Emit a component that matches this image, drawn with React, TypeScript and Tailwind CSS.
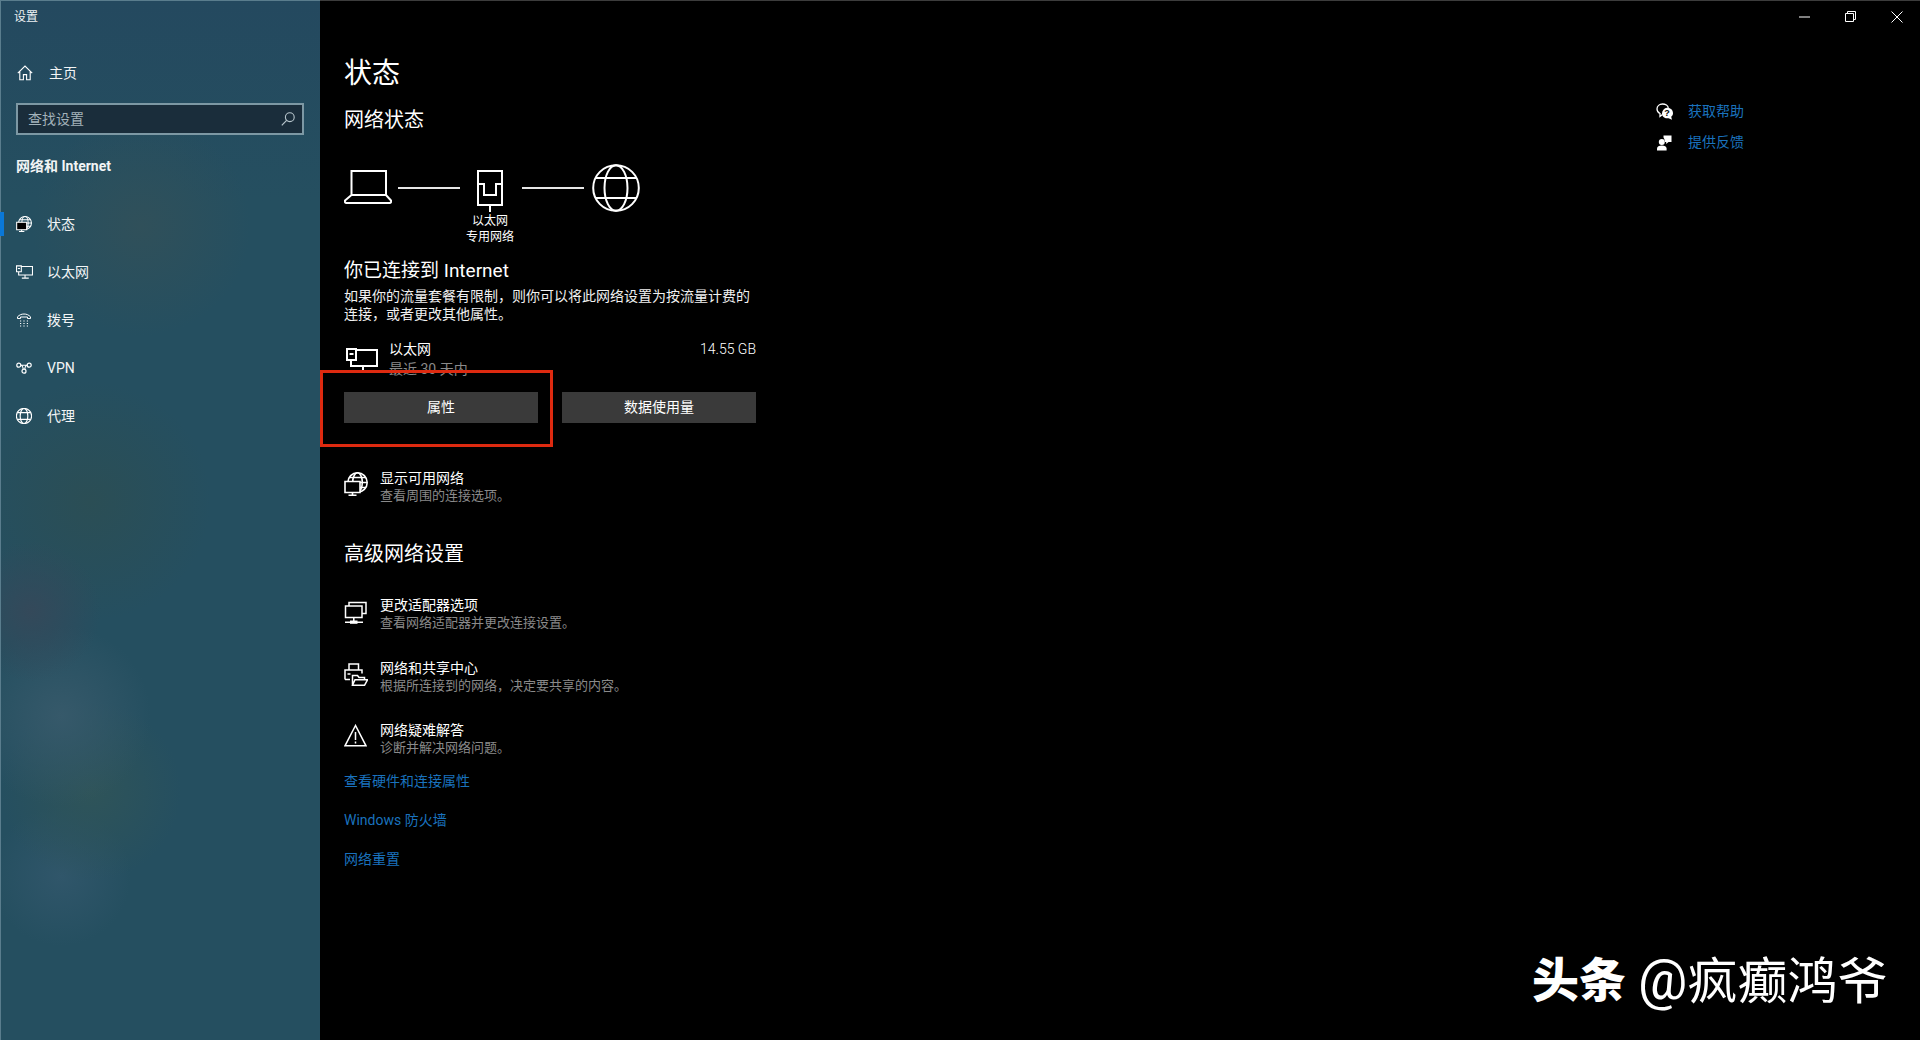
import React from "react";

const font = { fontFamily: 'Roboto, "Noto Sans CJK SC", sans-serif' };

function Svg({ w, h, vb, children, className = "" }: { w: number; h: number; vb?: string; children: React.ReactNode; className?: string }) {
  return (
    <svg width={w} height={h} viewBox={vb ?? `0 0 ${w} ${h}`} fill="none" stroke="currentColor" className={`block shrink-0 ${className}`}>
      {children}
    </svg>
  );
}

const HomeIcon = () => (
  <Svg w={16} h={16} vb="0 0 16 16">
    <path d="M.8 8.2 8 1l7.2 7.2M2.8 6.400v8.300h3.600V9.600h3.200v5.100h3.600V6.400" strokeWidth="1.100" />
  </Svg>
);
const SearchIcon = () => (
  <Svg w={14} h={14}>
    <circle cx="8.800" cy="5.200" r="4.400" strokeWidth="1.100" />
    <path d="M5.600 8.400 .8 13.400" strokeWidth="1.200" />
  </Svg>
);
const GlobeMonitor = ({ s }: { s: number }) => (
  <Svg w={s} h={s} vb="0 0 24 24">
    <g strokeWidth="1.600">
      <circle cx="13.500" cy="10.500" r="9.700" />
      <ellipse cx="13.500" cy="10.500" rx="4.800" ry="9.700" />
      <path d="M5.500 5.500h16.500M4 10.500h19M6 15.500h16" />
      <path d="M1 9.500h15v11H1z" fill="#000" />
      <path d="M8.500 20.500v3M4.500 23.200h8" />
    </g>
  </Svg>
);
const EthIcon = ({ w, h }: { w: number; h: number }) => (
  <Svg w={w} h={h} vb="0 0 32 25">
    <g strokeWidth="2">
      <path d="M1 1h9v11H1zM10 2h21v16H5v-6" />
      <path d="M17 18v6M11 24h13" />
      <path d="M3.500 6h4" />
    </g>
  </Svg>
);
const DialIcon = () => (
  <Svg w={16} h={16}>
    <path d="M1.500 6.500V4.800C3.500 2.800 5.500 2 8 2s4.500.8 6.500 2.800v1.700h-3V5H4.500v1.500z" strokeWidth="1" />
    <path d="M4 9h1.200M7.400 9h1.200M10.800 9H12M4 11.500h1.200M7.400 11.500h1.200M10.800 11.500H12M4 14h1.200M7.400 14h1.200M10.800 14H12" strokeWidth="1" />
  </Svg>
);
const VpnIcon = () => (
  <Svg w={16} h={12} vb="0 0 16 12">
    <circle cx="2.800" cy="3.200" r="2" strokeWidth="1.200" />
    <circle cx="13.200" cy="3.200" r="2" strokeWidth="1.200" />
    <circle cx="8" cy="9.200" r="2" strokeWidth="1.200" />
    <path d="M4.800 3.200c2 0 2.200 2 2.400 4.200M11.200 3.200c-2 0-2.200 2-2.400 4.200M4.800 3.200h6.400" strokeWidth="1.100" />
  </Svg>
);
const GlobeIcon = ({ s, sw }: { s: number; sw: number }) => (
  <Svg w={s} h={s} vb="0 0 48 48">
    <g strokeWidth={sw}>
      <circle cx="24" cy="24" r="22.800" />
      <ellipse cx="24" cy="24" rx="11.500" ry="22.800" />
      <path d="M4 14h40M4 34h40" />
    </g>
  </Svg>
);
const LaptopIcon = () => (
  <Svg w={48} h={34}>
    <path d="M7.500 25V1h34.500v24M7.500 25 1 30.500q-.5 2.500 1.500 2.500h43q2 0 1.500-2.500L42 25z" strokeWidth="2" />
  </Svg>
);
const PortIcon = () => (
  <Svg w={26} h={42}>
    <path d="M1 1h24v34H1zM1 14h6v11h12V14h6M13 35v7" strokeWidth="2" />
  </Svg>
);
const AdapterIcon = () => (
  <Svg w={23} h={23}>
    <path d="M5 5V1.500h17v11h-4" strokeWidth="1.500" />
    <path d="M1.500 5h16.500v11.500H1.500zM9.800 16.500v4M1 21.200h18" strokeWidth="1.500" />
    <path d="M6 19.500h7.500v3.300H6z" fill="currentColor" stroke="none" />
  </Svg>
);
const ShareIcon = () => (
  <Svg w={24} h={23}>
    <path d="M5 7V1h9.500v6M1 16.500V7h17v3.500M1 16.500h5M3.500 11h3" strokeWidth="1.500" />
    <path d="M8.500 22.300V12.500h5l1.500 2h5.500v3M8.500 22.300l2.500-5.500h12.500l-3 5.500z" strokeWidth="1.500" fill="#000" />
  </Svg>
);
const WarnIcon = () => (
  <Svg w={23} h={23}>
    <path d="M11.500 1.500 1 21.800h21zM11.500 8v8M11.500 17.500v2" strokeWidth="1.500" />
  </Svg>
);
const HelpIcon = () => (
  <Svg w={17} h={17}>
    <path d="M6.500 11.500 4 13.500v-3C2 9.500 1 7.800 1 6c0-3 2.500-5 5.500-5S12 2.800 12.300 4.800" strokeWidth="1.300" />
    <path d="M11 4.800a5.600 5.600 0 0 0-5 5.600c0 3 2.400 4.800 5 4.800h1.500l3.500 1.500-.8-3c1.200-1 1.800-2 1.800-3.500 0-3-2.500-5.400-5.500-5.400z" fill="currentColor" stroke="none" />
    <text x="11" y="13.400" fontSize="9" fontWeight="700" textAnchor="middle" fill="#000" stroke="none" fontFamily="Liberation Sans">?</text>
  </Svg>
);
const FeedbackIcon = () => (
  <Svg w={16} h={17}>
    <circle cx="5.800" cy="8" r="3" fill="currentColor" stroke="none" />
    <path d="M1 16.500V14.500c0-1.800 2-3 4.800-3s4.800 1.200 4.800 3v2z" fill="currentColor" stroke="none" />
    <path d="M7.500 1.500h8v6.500h-3l-2.300 2V8H9c-.2-2-.8-3.500-1.500-4.500z" fill="currentColor" stroke="none" />
  </Svg>
);

function NavItem({ icon, label, active = false }: { icon: React.ReactNode; label: string; active?: boolean }) {
  return (
    <div className="relative flex h-[48px] items-center pl-[15px]">
      {active && <div className="absolute -left-px top-[12px] h-[24px] w-[4px] bg-[#0a78d8]" />}
      <div className="flex w-[31px] justify-start text-white">{icon}</div>
      <span className="text-[14px] leading-[20px] text-[#f2f5f6]">{label}</span>
    </div>
  );
}

function LinkRow({ icon, title, sub, mt, iconMt }: { icon: React.ReactNode; title: string; sub: string; mt: string; iconMt: string }) {
  return (
    <div className={`flex items-start ${mt}`}>
      <div className={`flex w-[36px] text-white ${iconMt}`}>{icon}</div>
      <div>
        <div className="text-[14px] leading-[18px] text-white">{title}</div>
        <div className="text-[13px] leading-[18px] text-[#8a8a8a]">{sub}</div>
      </div>
    </div>
  );
}

export default function App() {
  return (
    <div style={font} className="relative flex h-[1040px] w-[1920px] overflow-hidden bg-black">
      <aside className="flex h-full w-[320px] shrink-0 flex-col border-t border-l border-[#5a7d8d] bg-[#254f60] bg-[radial-gradient(circle_at_30px_610px,#34495a_0,transparent_70px),radial-gradient(circle_at_60px_715px,#36596a_0,transparent_90px),radial-gradient(circle_at_90px_790px,#2f5459_0,transparent_90px),radial-gradient(circle_at_60px_875px,#30566a_0,transparent_70px),radial-gradient(circle_at_90px_500px,#2b4e55_0,transparent_120px),radial-gradient(circle_at_140px_225px,#30505a_0,transparent_110px),linear-gradient(180deg,#24495f_0,#254f60_200px)] pl-[15px] pr-[15px]">
        <div className="-ml-[2px] pt-[8px] text-[12px] leading-[16px] text-[#eef2f4]">设置</div>
        <div className="-ml-[15px] mt-[24px] flex h-[48px] items-center pl-[16px] text-white">
          <div className="flex w-[32px]"><HomeIcon /></div>
          <span className="text-[14px] leading-[20px] text-[#f2f5f6]">主页</span>
        </div>
        <div className="mt-[6px] flex h-[32px] w-[288px] items-center justify-between border-2 border-[#7d98a4] bg-[#1a2d3b] pl-[10px] pr-[7px]">
          <span className="text-[14px] leading-[20px] text-[#a3b2ba]">查找设置</span>
          <span className="text-[#b7c5cc]"><SearchIcon /></span>
        </div>
        <div className="mt-[21px] text-[14px] font-bold leading-[20px] text-[#f2f5f6]">网络和 Internet</div>
        <nav className="-ml-[15px] mt-[24px] flex flex-col">
          <NavItem active label="状态" icon={<GlobeMonitor s={16} />} />
          <NavItem label="以太网" icon={<EthIcon w={17} h={14} />} />
          <NavItem label="拨号" icon={<DialIcon />} />
          <NavItem label="VPN" icon={<VpnIcon />} />
          <NavItem label="代理" icon={<GlobeIcon s={16} sw={3.500} />} />
        </nav>
      </aside>

      <div className="flex min-w-0 flex-1 flex-col border-t border-[#3c3c3c]">
        <div className="flex h-0 justify-end pr-[17px] text-white">
          <div className="flex h-[31px] items-center gap-[35px]">
            <Svg w={11} h={2}><path d="M0 1h11" strokeWidth="1" /></Svg>
            <Svg w={11} h={11}><path d="M.5 2.500h8v8h-8zM2.500 2.500V.5h8v8h-2" strokeWidth="1" /></Svg>
            <Svg w={12} h={12}><path d="M.5.5l11 11M11.500.5l-11 11" strokeWidth="1" /></Svg>
          </div>
        </div>
        <div className="flex flex-1">
          <main className="ml-[24px] w-[412px] text-white">
            <h1 className="mt-[53px] text-[28px] font-normal leading-[40px]">状态</h1>
            <h2 className="mt-[12px] text-[20px] font-normal leading-[28px]">网络状态</h2>

            <div className="mt-[30px] flex items-start">
              <div className="mt-[6px]"><LaptopIcon /></div>
              <div className="ml-[6px] mt-[23px] h-[2px] w-[62px] bg-[#e6e6e6]" />
              <div className="ml-[17px] mt-[6px] flex w-[26px] flex-col items-center">
                <PortIcon />
                <div className="mt-[1px] whitespace-nowrap text-center text-[12px] leading-[16px]">以太网<br />专用网络</div>
              </div>
              <div className="ml-[19px] mt-[23px] h-[2px] w-[62px] bg-[#e6e6e6]" />
              <div className="ml-[8px]"><GlobeIcon s={48} sw={2} /></div>
            </div>

            <h3 className="mt-[12px] text-[19px] font-normal leading-[28px]">你已连接到 Internet</h3>
            <p className="mt-[2px] w-[412px] text-[14px] leading-[18px] text-[#f0f0f0]">如果你的流量套餐有限制，则你可以将此网络设置为按流量计费的连接，或者更改其他属性。</p>

            <div className="mt-[16px] flex items-start">
              <div className="ml-[2px] mt-[9px] w-[44px] -mr-[1px] text-white"><EthIcon w={32} h={25} /></div>
              <div className="flex-1">
                <div className="flex justify-between text-[14px] leading-[20px]"><span>以太网</span><span className="font-light">14.55 GB</span></div>
                <div className="text-[14px] leading-[20px] text-[#8a8a8a]">最近 30 天内</div>
              </div>
            </div>

            <div className="mt-[13px] flex gap-[24px]">
              <div className="flex h-[31px] w-[194px] items-center justify-center bg-[#3a3a3a] text-[14px]">属性</div>
              <div className="flex h-[31px] w-[194px] items-center justify-center bg-[#3a3a3a] text-[14px]">数据使用量</div>
            </div>

            <LinkRow mt="mt-[46px]" iconMt="mt-[3px]" icon={<GlobeMonitor s={24} />} title="显示可用网络" sub="查看周围的连接选项。" />

            <h3 className="mt-[35px] text-[20px] font-normal leading-[28px]">高级网络设置</h3>

            <LinkRow mt="mt-[28px]" iconMt="mt-[5px]" icon={<AdapterIcon />} title="更改适配器选项" sub="查看网络适配器并更改连接设置。" />
            <LinkRow mt="mt-[27px]" iconMt="mt-[4px]" icon={<ShareIcon />} title="网络和共享中心" sub="根据所连接到的网络，决定要共享的内容。" />
            <LinkRow mt="mt-[26px]" iconMt="mt-[3px]" icon={<WarnIcon />} title="网络疑难解答" sub="诊断并解决网络问题。" />

            <div className="mt-[14px] flex flex-col gap-[19px] text-[14px] leading-[20px] text-[#1a72bd]">
              <span>查看硬件和连接属性</span>
              <span>Windows 防火墙</span>
              <span>网络重置</span>
            </div>
          </main>

          <aside className="ml-[900px] mt-[100px] flex flex-col gap-[11px] text-[14px] leading-[20px] text-[#1a72bd]">
            <div className="flex items-center"><span className="w-[32px] text-white"><HelpIcon /></span>获取帮助</div>
            <div className="flex items-center"><span className="w-[32px] text-white"><FeedbackIcon /></span>提供反馈</div>
          </aside>
        </div>
      </div>

      <div className="absolute left-[320px] top-[370px] h-[77px] w-[233px] border-[3px] border-[#de2a10]" />

      <div className="absolute left-[1532px] top-[946px] flex items-center whitespace-nowrap leading-[68px] text-white">
        <span className="text-[47px] font-black">头条</span>
        <span className="ml-[12px] text-[50px]"><span className="text-[55px]">@</span>疯癫鸿爷</span>
      </div>
    </div>
  );
}
